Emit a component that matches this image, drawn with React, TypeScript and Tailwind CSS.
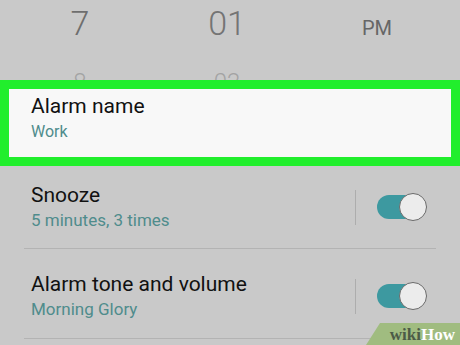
const ROWS = [
	{ title: 'Snooze', sub: '5 minutes, 3 times', pad: 'pt-[17px] pb-[17px]' },
	{ title: 'Alarm tone and volume', sub: 'Morning Glory', pad: 'pt-[23px] pb-[18px]' },
];

function Toggle() {
	return (
		<div className="relative w-[50px] h-[28px]">
			<div className="absolute left-0 top-[2px] w-[40px] h-[24px] rounded-full bg-[#3d99a0]" />
			<div className="absolute right-0 top-0 w-[28px] h-[28px] rounded-full bg-[#ececec] border border-[#6a6a6a]" />
		</div>
	);
}

export default function App() {
	return (
		<div className="relative w-[460px] h-[345px] overflow-hidden bg-[#c9c9c9] font-['Roboto','Liberation_Sans',sans-serif]">
			{/* time picker, next values peek under the highlighted row */}
			<div className="h-[80px] overflow-hidden">
				<div className="flex pt-[3px] leading-[40px]">
					<div className="w-[160px] text-center text-[34px] font-light text-[#6e6e6e]">7</div>
					<div className="w-[134px] text-center text-[34px] font-light text-[#747474]">01</div>
					<div className="w-[166px] text-center text-[20px] text-[#666] pt-[5px]">PM</div>
				</div>
				<div className="flex mt-[20px] leading-[28px]">
					<div className="w-[160px] text-center text-[24px] font-light text-[#a3a3a3]">8</div>
					<div className="w-[134px] text-center text-[24px] font-light text-[#a3a3a3]">02</div>
				</div>
			</div>

			{/* highlighted row */}
			<div className="h-[86px] border-[9px] border-[#21ee2c] bg-[#f8f8f8] pl-[22px] pt-[5px]">
				<div className="text-[21px] leading-[24px] text-[#111]">Alarm name</div>
				<div className="mt-[3px] text-[16px] leading-[22px] text-[#4f8c8c]">Work</div>
			</div>

			{ROWS.map((row) => (
				<div key={row.title}>
					<div className={`flex items-center ${row.pad}`}>
						<div className="flex-1 pl-[31px]">
							<div className="text-[21px] leading-[24px] text-[#111]">{row.title}</div>
							<div className="mt-[2px] text-[17px] leading-[22px] text-[#4f8c8c]">{row.sub}</div>
						</div>
						<div className="w-px h-[35px] bg-[#adadad]" />
						<div className="ml-[21px] mr-[33px]">
							<Toggle />
						</div>
					</div>
					<div className="mx-6 h-px bg-[#b3b3b3]" />
				</div>
			))}

			{/* watermark */}
			<div className="absolute right-0 bottom-0 w-[94px] h-[22px] bg-[#a0bc80] [clip-path:polygon(14px_0,100%_0,100%_100%,0_100%)] flex items-center justify-end pr-[5px] font-['Liberation_Serif',serif] font-bold text-[17px] leading-none">
				<span className="text-[#4c5b47]">wiki</span>
				<span className="text-white">How</span>
			</div>
		</div>
	);
}
